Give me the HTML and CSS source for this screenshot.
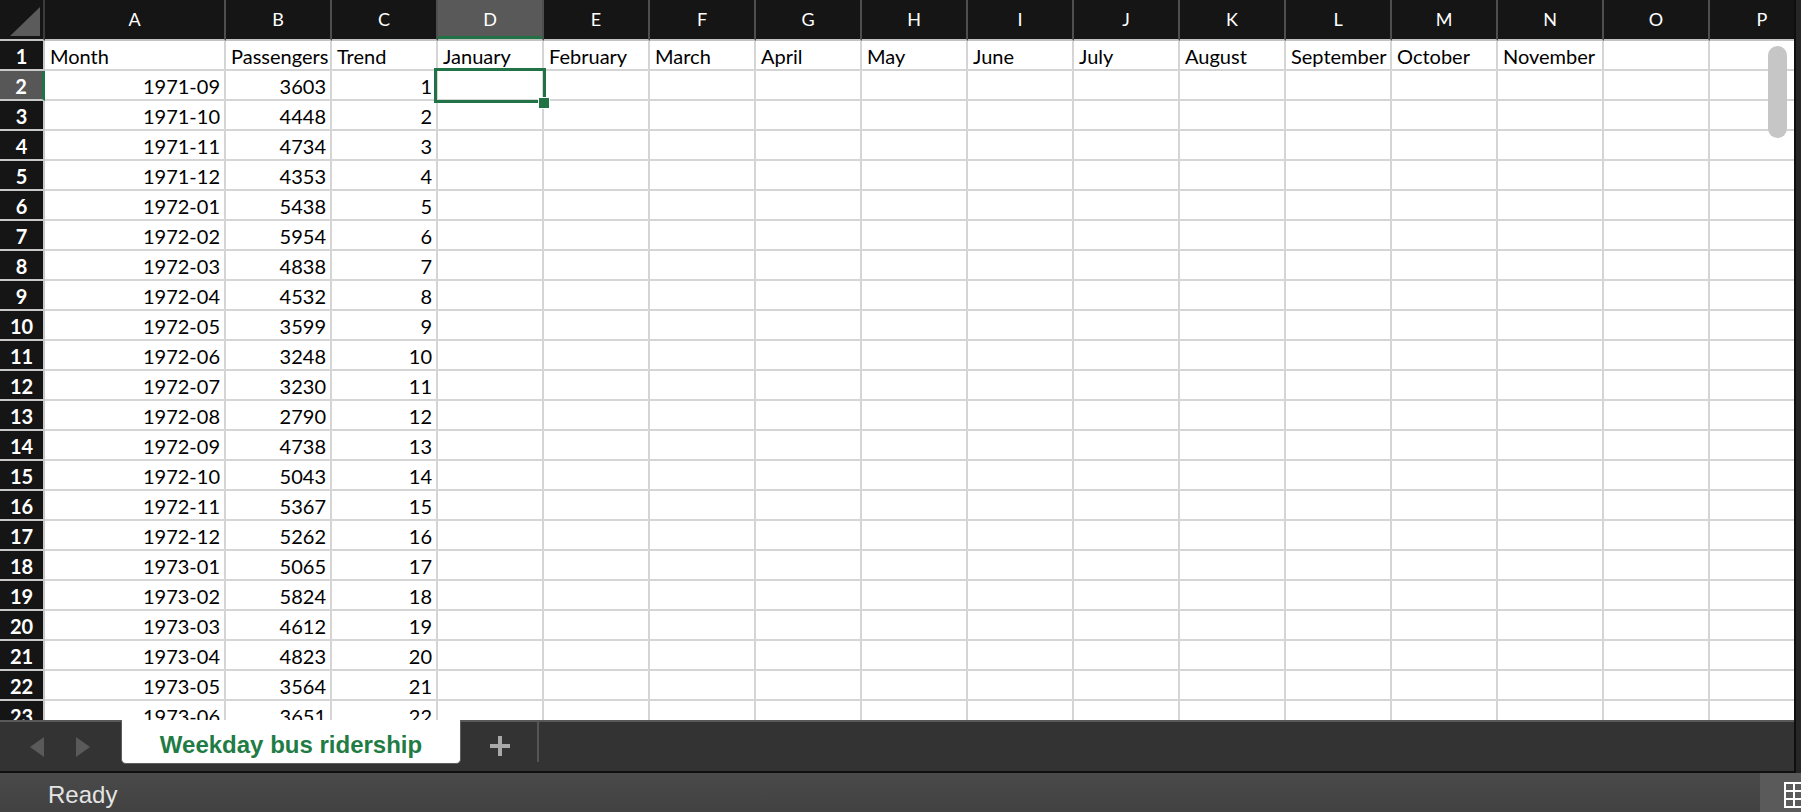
FILE: index.html
```html
<!DOCTYPE html>
<html lang="en">
<head>
    <meta charset="UTF-8">
    <meta name="viewport" content="width=device-width, initial-scale=1.0">
    <title>Weekday bus ridership</title>
    <link rel="stylesheet" href="styles.css">
</head>
<body>
<div class="app">
    <div class="workspace">
        <div class="main">
            <div class="grid">
                <div class="row head">
                    <div class="corner"><span class="tri"></span></div>
                    <div class="col wide">A</div><div class="col">B</div><div class="col">C</div><div class="col sel">D</div><div class="col">E</div><div class="col">F</div><div class="col">G</div><div class="col">H</div><div class="col">I</div><div class="col">J</div><div class="col">K</div><div class="col">L</div><div class="col">M</div><div class="col">N</div><div class="col">O</div><div class="col">P</div>
                </div>
                <div class="row"><div class="rn">1</div><div class="c wide">Month</div><div class="c">Passengers</div><div class="c">Trend</div><div class="c">January</div><div class="c">February</div><div class="c">March</div><div class="c">April</div><div class="c">May</div><div class="c">June</div><div class="c">July</div><div class="c">August</div><div class="c">September</div><div class="c">October</div><div class="c">November</div><div class="c"></div><div class="c"></div></div>
                <div class="row"><div class="rn sel">2</div><div class="c wide n">1971-09</div><div class="c n">3603</div><div class="c n">1</div><div class="c"></div><div class="c"></div><div class="c"></div><div class="c"></div><div class="c"></div><div class="c"></div><div class="c"></div><div class="c"></div><div class="c"></div><div class="c"></div><div class="c"></div><div class="c"></div><div class="c"></div></div>
                <div class="row"><div class="rn">3</div><div class="c wide n">1971-10</div><div class="c n">4448</div><div class="c n">2</div><div class="c"></div><div class="c"></div><div class="c"></div><div class="c"></div><div class="c"></div><div class="c"></div><div class="c"></div><div class="c"></div><div class="c"></div><div class="c"></div><div class="c"></div><div class="c"></div><div class="c"></div></div>
                <div class="row"><div class="rn">4</div><div class="c wide n">1971-11</div><div class="c n">4734</div><div class="c n">3</div><div class="c"></div><div class="c"></div><div class="c"></div><div class="c"></div><div class="c"></div><div class="c"></div><div class="c"></div><div class="c"></div><div class="c"></div><div class="c"></div><div class="c"></div><div class="c"></div><div class="c"></div></div>
                <div class="row"><div class="rn">5</div><div class="c wide n">1971-12</div><div class="c n">4353</div><div class="c n">4</div><div class="c"></div><div class="c"></div><div class="c"></div><div class="c"></div><div class="c"></div><div class="c"></div><div class="c"></div><div class="c"></div><div class="c"></div><div class="c"></div><div class="c"></div><div class="c"></div><div class="c"></div></div>
                <div class="row"><div class="rn">6</div><div class="c wide n">1972-01</div><div class="c n">5438</div><div class="c n">5</div><div class="c"></div><div class="c"></div><div class="c"></div><div class="c"></div><div class="c"></div><div class="c"></div><div class="c"></div><div class="c"></div><div class="c"></div><div class="c"></div><div class="c"></div><div class="c"></div><div class="c"></div></div>
                <div class="row"><div class="rn">7</div><div class="c wide n">1972-02</div><div class="c n">5954</div><div class="c n">6</div><div class="c"></div><div class="c"></div><div class="c"></div><div class="c"></div><div class="c"></div><div class="c"></div><div class="c"></div><div class="c"></div><div class="c"></div><div class="c"></div><div class="c"></div><div class="c"></div><div class="c"></div></div>
                <div class="row"><div class="rn">8</div><div class="c wide n">1972-03</div><div class="c n">4838</div><div class="c n">7</div><div class="c"></div><div class="c"></div><div class="c"></div><div class="c"></div><div class="c"></div><div class="c"></div><div class="c"></div><div class="c"></div><div class="c"></div><div class="c"></div><div class="c"></div><div class="c"></div><div class="c"></div></div>
                <div class="row"><div class="rn">9</div><div class="c wide n">1972-04</div><div class="c n">4532</div><div class="c n">8</div><div class="c"></div><div class="c"></div><div class="c"></div><div class="c"></div><div class="c"></div><div class="c"></div><div class="c"></div><div class="c"></div><div class="c"></div><div class="c"></div><div class="c"></div><div class="c"></div><div class="c"></div></div>
                <div class="row"><div class="rn">10</div><div class="c wide n">1972-05</div><div class="c n">3599</div><div class="c n">9</div><div class="c"></div><div class="c"></div><div class="c"></div><div class="c"></div><div class="c"></div><div class="c"></div><div class="c"></div><div class="c"></div><div class="c"></div><div class="c"></div><div class="c"></div><div class="c"></div><div class="c"></div></div>
                <div class="row"><div class="rn">11</div><div class="c wide n">1972-06</div><div class="c n">3248</div><div class="c n">10</div><div class="c"></div><div class="c"></div><div class="c"></div><div class="c"></div><div class="c"></div><div class="c"></div><div class="c"></div><div class="c"></div><div class="c"></div><div class="c"></div><div class="c"></div><div class="c"></div><div class="c"></div></div>
                <div class="row"><div class="rn">12</div><div class="c wide n">1972-07</div><div class="c n">3230</div><div class="c n">11</div><div class="c"></div><div class="c"></div><div class="c"></div><div class="c"></div><div class="c"></div><div class="c"></div><div class="c"></div><div class="c"></div><div class="c"></div><div class="c"></div><div class="c"></div><div class="c"></div><div class="c"></div></div>
                <div class="row"><div class="rn">13</div><div class="c wide n">1972-08</div><div class="c n">2790</div><div class="c n">12</div><div class="c"></div><div class="c"></div><div class="c"></div><div class="c"></div><div class="c"></div><div class="c"></div><div class="c"></div><div class="c"></div><div class="c"></div><div class="c"></div><div class="c"></div><div class="c"></div><div class="c"></div></div>
                <div class="row"><div class="rn">14</div><div class="c wide n">1972-09</div><div class="c n">4738</div><div class="c n">13</div><div class="c"></div><div class="c"></div><div class="c"></div><div class="c"></div><div class="c"></div><div class="c"></div><div class="c"></div><div class="c"></div><div class="c"></div><div class="c"></div><div class="c"></div><div class="c"></div><div class="c"></div></div>
                <div class="row"><div class="rn">15</div><div class="c wide n">1972-10</div><div class="c n">5043</div><div class="c n">14</div><div class="c"></div><div class="c"></div><div class="c"></div><div class="c"></div><div class="c"></div><div class="c"></div><div class="c"></div><div class="c"></div><div class="c"></div><div class="c"></div><div class="c"></div><div class="c"></div><div class="c"></div></div>
                <div class="row"><div class="rn">16</div><div class="c wide n">1972-11</div><div class="c n">5367</div><div class="c n">15</div><div class="c"></div><div class="c"></div><div class="c"></div><div class="c"></div><div class="c"></div><div class="c"></div><div class="c"></div><div class="c"></div><div class="c"></div><div class="c"></div><div class="c"></div><div class="c"></div><div class="c"></div></div>
                <div class="row"><div class="rn">17</div><div class="c wide n">1972-12</div><div class="c n">5262</div><div class="c n">16</div><div class="c"></div><div class="c"></div><div class="c"></div><div class="c"></div><div class="c"></div><div class="c"></div><div class="c"></div><div class="c"></div><div class="c"></div><div class="c"></div><div class="c"></div><div class="c"></div><div class="c"></div></div>
                <div class="row"><div class="rn">18</div><div class="c wide n">1973-01</div><div class="c n">5065</div><div class="c n">17</div><div class="c"></div><div class="c"></div><div class="c"></div><div class="c"></div><div class="c"></div><div class="c"></div><div class="c"></div><div class="c"></div><div class="c"></div><div class="c"></div><div class="c"></div><div class="c"></div><div class="c"></div></div>
                <div class="row"><div class="rn">19</div><div class="c wide n">1973-02</div><div class="c n">5824</div><div class="c n">18</div><div class="c"></div><div class="c"></div><div class="c"></div><div class="c"></div><div class="c"></div><div class="c"></div><div class="c"></div><div class="c"></div><div class="c"></div><div class="c"></div><div class="c"></div><div class="c"></div><div class="c"></div></div>
                <div class="row"><div class="rn">20</div><div class="c wide n">1973-03</div><div class="c n">4612</div><div class="c n">19</div><div class="c"></div><div class="c"></div><div class="c"></div><div class="c"></div><div class="c"></div><div class="c"></div><div class="c"></div><div class="c"></div><div class="c"></div><div class="c"></div><div class="c"></div><div class="c"></div><div class="c"></div></div>
                <div class="row"><div class="rn">21</div><div class="c wide n">1973-04</div><div class="c n">4823</div><div class="c n">20</div><div class="c"></div><div class="c"></div><div class="c"></div><div class="c"></div><div class="c"></div><div class="c"></div><div class="c"></div><div class="c"></div><div class="c"></div><div class="c"></div><div class="c"></div><div class="c"></div><div class="c"></div></div>
                <div class="row"><div class="rn">22</div><div class="c wide n">1973-05</div><div class="c n">3564</div><div class="c n">21</div><div class="c"></div><div class="c"></div><div class="c"></div><div class="c"></div><div class="c"></div><div class="c"></div><div class="c"></div><div class="c"></div><div class="c"></div><div class="c"></div><div class="c"></div><div class="c"></div><div class="c"></div></div>
                <div class="row"><div class="rn">23</div><div class="c wide n">1973-06</div><div class="c n">3651</div><div class="c n">22</div><div class="c"></div><div class="c"></div><div class="c"></div><div class="c"></div><div class="c"></div><div class="c"></div><div class="c"></div><div class="c"></div><div class="c"></div><div class="c"></div><div class="c"></div><div class="c"></div><div class="c"></div></div>

                <div class="selection"><span class="handle"></span></div>
                <div class="thumb"></div>
            </div>

            <div class="tabbar">
                <div class="nav">
                    <span class="arrow left"></span>
                    <span class="arrow right"></span>
                </div>
                <div class="tab">Weekday bus ridership</div>
                <svg class="add" width="20" height="20" viewBox="0 0 20 20"><path d="M10 0v20M0 10h20" stroke="#a9a9a9" stroke-width="4"/></svg>
                <span class="sep"></span>
            </div>
        </div>
        <div class="edge"></div>
    </div>

    <div class="status">
        <span class="ready">Ready</span>
        <div class="view">
            <svg width="26" height="26" viewBox="0 0 26 26">
                <rect width="26" height="26" fill="#fff"/>
                <rect x="2" y="2" width="7" height="6" fill="#5a5a5a"/>
                <rect x="11" y="2" width="7" height="6" fill="#5a5a5a"/>
                <rect x="2" y="10" width="7" height="6" fill="#5a5a5a"/>
                <rect x="11" y="10" width="7" height="6" fill="#5a5a5a"/>
                <rect x="2" y="18" width="7" height="6" fill="#5a5a5a"/>
                <rect x="11" y="18" width="7" height="6" fill="#5a5a5a"/>
            </svg>
        </div>
    </div>
</div>
</body>
</html>
```

FILE: styles.css
```css
body {
    margin: 0;
    background: #333;
    font-family: Lato, "Open Sans", sans-serif;
    overflow: hidden;
}
.app {
    width: 1801px;
    height: 812px;
    display: flex;
    flex-direction: column;
}
.workspace {
    display: flex;
    height: 773px;
}
.main {
    width: 1794px;
    display: flex;
    flex-direction: column;
}
.edge {
    width: 7px;
    background: #262626;
    border-left: 2px solid #0e0e0e;
    box-sizing: border-box;
}

/* sheet grid */
.grid {
    position: relative;
    height: 720px;
    overflow: hidden;
    background: #fff;
}
.row {
    display: flex;
    height: 30px;
}
.row > div {
    flex: none;
    box-sizing: border-box;
    width: 106px;
}
.row > .wide {
    width: 181px;
}
.row.head {
    height: 41px;
}
.corner {
    position: relative;
    width: 45px !important;
    background: #151515;
    border-right: 2px solid #3c3c3c;
    border-bottom: 2px solid #c3c3c3;
}
.tri {
    position: absolute;
    left: 10px;
    top: 7px;
    width: 0;
    height: 0;
    border-left: 30px solid transparent;
    border-bottom: 29px solid #5b5b5b;
}
.col {
    background: #151515;
    color: #fff;
    font-size: 18px;
    line-height: 39px;
    text-align: center;
    border-right: 2px solid #4e4e4e;
    border-bottom: 2px solid #c3c3c3;
}
.col.sel {
    background: #595959;
    box-shadow: inset 0 -3px 0 #217346;
}
.rn {
    width: 45px !important;
    background: #151515;
    color: #fff;
    font-size: 20px;
    font-weight: 700;
    line-height: 28px;
    padding-top: 1px;
    text-align: center;
    border-right: 2px solid #c8c8c8;
    border-bottom: 2px solid #c8c8c8;
}
.rn.sel {
    background: #575757;
    border-right: 3px solid #217346;
}
.c {
    color: #000;
    font-size: 20px;
    line-height: 28px;
    padding: 1px 4px 0 5px;
    white-space: nowrap;
    overflow: hidden;
    border-right: 2px solid #d5d5d5;
    border-bottom: 2px solid #d5d5d5;
}
.c.n {
    text-align: right;
}

.selection {
    position: absolute;
    left: 434px;
    top: 68px;
    width: 112px;
    height: 35px;
    border: 3px solid #217346;
    box-sizing: border-box;
}
.handle {
    position: absolute;
    left: 101px;
    top: 26px;
    width: 10px;
    height: 10px;
    background: #217346;
    border: 1px solid #fff;
}
.thumb {
    position: absolute;
    left: 1768px;
    top: 46px;
    width: 19px;
    height: 92px;
    border-radius: 10px;
    background: #c6c6c6;
}

/* sheet tabs */
.tabbar {
    height: 51px;
    display: flex;
    align-items: flex-start;
    background: #333;
    box-shadow: inset 0 2px 0 #585858;
    border-bottom: 2px solid #101010;
}
.nav {
    display: flex;
    padding: 17px 0 0 30px;
}
.arrow {
    width: 0;
    height: 0;
    border-top: 10px solid transparent;
    border-bottom: 10px solid transparent;
}
.arrow.left {
    border-right: 14px solid #5a5a5a;
}
.arrow.right {
    margin-left: 32px;
    border-left: 14px solid #5a5a5a;
}
.tab {
    margin-left: 31px;
    width: 340px;
    height: 44px;
    box-sizing: border-box;
    background: #fff;
    border: 1px solid #5e5e5e;
    border-top: none;
    border-radius: 0 0 5px 5px;
    color: #1f7c44;
    font-family: "Liberation Sans", Arial, sans-serif;
    font-weight: 700;
    font-size: 24px;
    line-height: 50px;
    text-align: center;
}
.add {
    margin: 16px 0 0 29px;
}
.sep {
    margin: 2px 0 0 27px;
    width: 2px;
    height: 40px;
    background: #555;
}

/* status bar */
.status {
    flex: 1;
    display: flex;
    justify-content: space-between;
    background: linear-gradient(#4a4a4a, #414141);
}
.ready {
    padding: 3px 0 0 48px;
    color: #e4e4e4;
    font-family: "Liberation Sans", Arial, sans-serif;
    font-size: 24px;
    line-height: 38px;
}
.view {
    width: 41px;
    overflow: hidden;
    background: #5a5a5a;
    padding: 9px 0 0 24px;
    box-sizing: border-box;
}
.view svg {
    display: block;
}
```
